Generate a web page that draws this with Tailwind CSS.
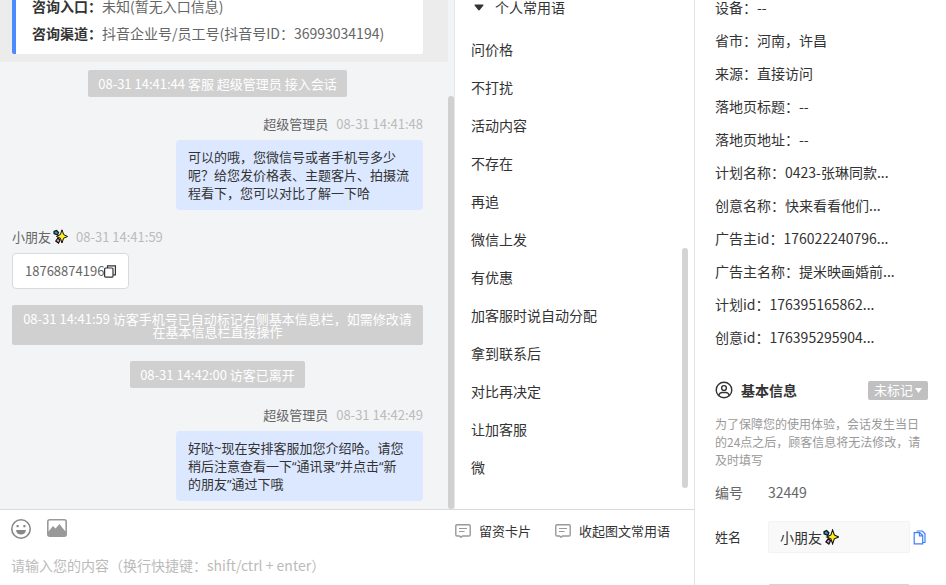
<!DOCTYPE html>
<html lang="zh-CN">
<head>
  <meta charset="UTF-8">
  <meta name="viewport" content="width=device-width, initial-scale=1.0">
  <title>客服会话</title>
  <script src="https://cdn.jsdelivr.net/npm/@tailwindcss/browser@4"></script>
</head>
<body class="flex h-screen overflow-hidden bg-white font-['Noto_Sans_CJK_SC',sans-serif] text-sm text-[#333]">

  <svg class="hidden">
    <symbol id="sparkle" viewBox="0 0 15 15">
      <path d="M3.500 1.500L5.500 3.500 4.500 6 1 4.500 1 2.500z" fill="#1d9bb5" stroke="#111" stroke-width="1.200"/>
      <path d="M5 9l2 2-1.500 3L2.800 12z" fill="#e59ad0" stroke="#111" stroke-width="1.200"/>
      <path d="M9 .8l1.600 4.700L14.600 7.500l-4 1.700L9 14l-1.600-4.800L3.500 7.500l3.900-2z" fill="#fdee21" stroke="#111" stroke-width="1"/>
    </symbol>
    <symbol id="card" viewBox="0 0 16 14" fill="none" stroke="#999">
      <path d="M2 .75h12a1.200 1.200 0 0 1 1.200 1.200v8.800a1.200 1.200 0 0 1-1.200 1.200H7.500L6 13.300 4.500 11.950H2A1.200 1.200 0 0 1 .8 10.750V1.950A1.200 1.200 0 0 1 2 .75z" stroke-width="1.400"/>
      <path d="M4 4.500h8M4 7.500h5.500"/>
    </symbol>
  </svg>

  <main class="flex min-w-0 flex-1 flex-col">
    <div class="flex min-h-0 flex-1">
      <!-- chat -->
      <section class="relative flex min-w-0 flex-1 flex-col justify-end overflow-hidden border-r border-[#e4e7eb] bg-[#f3f4f6] pr-1.5">
        <div class="bg-[#ececec] pr-[25px] pb-2 pl-3">
          <dl class="rounded-xs border-l-4 border-[#4c8bff] bg-white pb-[7px] pl-4 leading-[27px] text-[#666]">
            <div class="flex"><dt class="font-bold text-[#333]">咨询入口：</dt><dd>未知(暂无入口信息)</dd></div>
            <div class="flex"><dt class="font-bold text-[#333]">咨询渠道：</dt><dd>抖音企业号/员工号(抖音号ID：36993034194)</dd></div>
          </dl>
        </div>
        <div class="flex flex-col gap-4 pt-2 pr-[25px] pb-2 pl-3 text-[13px]">
          <p class="self-center rounded-xs bg-[#d0d0d0] px-2.5 py-[7px] text-center leading-[13px] text-white">08-31 14:41:44 客服 超级管理员 接入会话</p>
          <div class="flex flex-col items-end gap-1.5">
            <div class="flex gap-2 leading-[21px] text-[#666]">超级管理员<time class="text-[#bbb]">08-31 14:41:48</time></div>
            <p class="w-[247px] rounded bg-[#dce8ff] px-3 py-2 leading-[18px]">可以的哦，您微信号或者手机号多少呢？给您发价格表、主题客片、拍摄流程看下，您可以对比了解一下哈</p>
          </div>
          <div class="flex flex-col items-start gap-1.5">
            <div class="flex items-center leading-[21px] text-[#666]">小朋友<svg class="ml-0.5 size-[15px]"><use href="#sparkle"/></svg><time class="ml-2 text-[#bbb]">08-31 14:41:59</time></div>
            <div class="flex h-9 items-center rounded border border-[#d8dadd] bg-white px-3 text-[#666]">18768874196<button aria-label="复制"><svg class="h-[13px] w-3" viewBox="0 0 12 13" fill="none" stroke="#333" stroke-width="1.200"><path d="M3.500 3V.8h7.900v9H9.300"/><rect x=".6" y="3" width="8.400" height="9.200" rx="1"/></svg></button></div>
          </div>
          <p class="self-center rounded-xs bg-[#d0d0d0] px-2.5 py-[7px] text-center leading-[13px] text-white">08-31 14:41:59 访客手机号已自动标记右侧基本信息栏，如需修改请在基本信息栏直接操作</p>
          <p class="self-center rounded-xs bg-[#d0d0d0] px-2.5 py-[7px] text-center leading-[13px] text-white">08-31 14:42:00 访客已离开</p>
          <div class="flex flex-col items-end gap-1.5">
            <div class="flex gap-2 leading-[21px] text-[#666]">超级管理员<time class="text-[#bbb]">08-31 14:42:49</time></div>
            <p class="w-[247px] rounded bg-[#dce8ff] px-3 py-2 font-['Open_Sans','Noto_Sans_CJK_SC',sans-serif] leading-[18px]">好哒~现在安排客服加您介绍哈。请您<br>稍后注意查看一下“通讯录”并点击“新<br>的朋友”通过下哦</p>
          </div>
        </div>
        <div class="absolute top-24 right-0 bottom-0 w-1.5 rounded-full bg-[#d0d0d0]"></div>
      </section>

      <!-- phrases -->
      <section class="relative w-[239px] shrink-0 overflow-hidden px-4">
        <h2 class="flex items-center pb-4 leading-[14px]"><svg class="mr-[11px] ml-[3px] h-[7px] w-[10px]" viewBox="0 0 10 7"><path d="M1 .5h8q1 .3.400 1L5.800 6q-.8.800-1.600 0L.6 1.500Q0 .8 1 .5z" fill="#333"/></svg>个人常用语</h2>
        <ul class="leading-[38px]">
          <li>问价格</li>
          <li>不打扰</li>
          <li>活动内容</li>
          <li>不存在</li>
          <li>再追</li>
          <li>微信上发</li>
          <li>有优惠</li>
          <li>加客服时说自动分配</li>
          <li>拿到联系后</li>
          <li>对比再决定</li>
          <li>让加客服</li>
          <li>微</li>
        </ul>
        <div class="absolute top-[248px] right-1.5 h-60 w-1.5 rounded-full bg-[#d4d4d4]"></div>
      </section>
    </div>

    <!-- composer -->
    <footer class="h-[76px] shrink-0 border-t border-[#d8dadd]">
      <div class="flex items-start pt-[9px] pr-6 pl-[11px] text-[13px]">
        <button aria-label="表情"><svg class="size-5" viewBox="0 0 20 20"><circle cx="10" cy="10" r="9.200" fill="none" stroke="#888" stroke-width="1.600"/><rect x="5.500" y="6" width="2.200" height="2.200" rx=".5" fill="#888"/><rect x="12.300" y="6" width="2.200" height="2.200" rx=".5" fill="#888"/><path d="M5 11h10q-.7 4.500-5 4.500T5 11z" fill="#888"/></svg></button>
        <button class="ml-4" aria-label="图片"><svg class="h-[18px] w-5" viewBox="0 0 20 18"><rect x=".8" y=".8" width="18.400" height="16.400" rx="2" fill="none" stroke="#999" stroke-width="1.600"/><path d="M1 13l5-6 2.500 2.500L12.500 5l3.500 4.500 3 3.500v4H1z" fill="#999"/></svg></button>
        <button class="ml-auto flex items-center gap-2 leading-6"><svg class="h-[14px] w-4"><use href="#card"/></svg>留资卡片</button>
        <button class="ml-6 flex items-center gap-2 leading-6"><svg class="h-[14px] w-4"><use href="#card"/></svg>收起图文常用语</button>
      </div>
      <textarea rows="1" aria-label="消息内容" class="mt-2.5 block w-full resize-none overflow-hidden px-[11px] leading-6 outline-none placeholder:text-[#bbb]" placeholder="请输入您的内容（换行快捷键：shift/ctrl + enter）"></textarea>
    </footer>
  </main>

  <!-- visitor details -->
  <aside class="w-[252px] shrink-0 overflow-hidden border-l border-[#e4e4e4] pr-[18px] pl-5">
    <ul class="flex flex-col gap-[19px] leading-[14px]">
      <li>设备：--</li>
      <li>省市：河南，许昌</li>
      <li>来源：直接访问</li>
      <li>落地页标题：--</li>
      <li>落地页地址：--</li>
      <li>计划名称：0423-张琳同款...</li>
      <li>创意名称：快来看看他们...</li>
      <li>广告主id：176022240796...</li>
      <li>广告主名称：提米映画婚前...</li>
      <li>计划id：176395165862...</li>
      <li>创意id：176395295904...</li>
    </ul>
    <div class="mt-9 flex items-center">
      <svg class="size-[18px]" viewBox="0 0 18 18" fill="none" stroke="#333" stroke-width="1.400"><circle cx="9" cy="9" r="7.800"/><circle cx="9" cy="7" r="2.400"/><path d="M3.800 14.500q.7-3 3.400-3h3.600q2.700 0 3.400 3"/></svg>
      <h2 class="ml-2 leading-5 font-bold">基本信息</h2>
      <button class="ml-auto flex h-[19px] w-[60px] items-center justify-center gap-0.5 rounded-xs bg-[#c0c0c0] text-[13px] text-white">未标记<svg class="h-[5px] w-[7px]" viewBox="0 0 7 5"><path d="M0 0h7L3.500 5z" fill="#fff"/></svg></button>
    </div>
    <p class="mt-[15px] text-xs leading-[18px] text-[#999]">为了保障您的使用体验，会话发生当日的24点之后，顾客信息将无法修改，请及时填写</p>
    <div class="mt-[11px] flex leading-6 text-[#666]"><span class="w-[53px]">编号</span><span>32449</span></div>
    <div class="mt-[17px] flex items-center">
      <label for="name" class="w-[53px] text-[13px]">姓名</label>
      <div class="flex h-8 w-[142px] items-center rounded-xs border border-[#f3f3f3] bg-[#f9f9f9] pl-[11px]">
        <input id="name" class="w-[43px] outline-none" value="小朋友"><svg class="size-4"><use href="#sparkle"/></svg>
      </div>
      <button class="ml-[3px] shrink-0" aria-label="复制姓名"><svg class="h-[15px] w-[13px]" viewBox="0 0 13 15" fill="none" stroke="#3f7ff5" stroke-width="1.200"><path d="M1.200 2.600h5.500l3 3v8.200H1.200z"/><path d="M6.500 2.800v3h3M3.500 1h5.800L12 3.800v8.700h-2"/></svg></button>
    </div>
    <div class="mt-[31px] ml-[53px] h-8 w-[142px] rounded-xs border border-[#d4d4d4]"></div>
  </aside>
</body>
</html>
